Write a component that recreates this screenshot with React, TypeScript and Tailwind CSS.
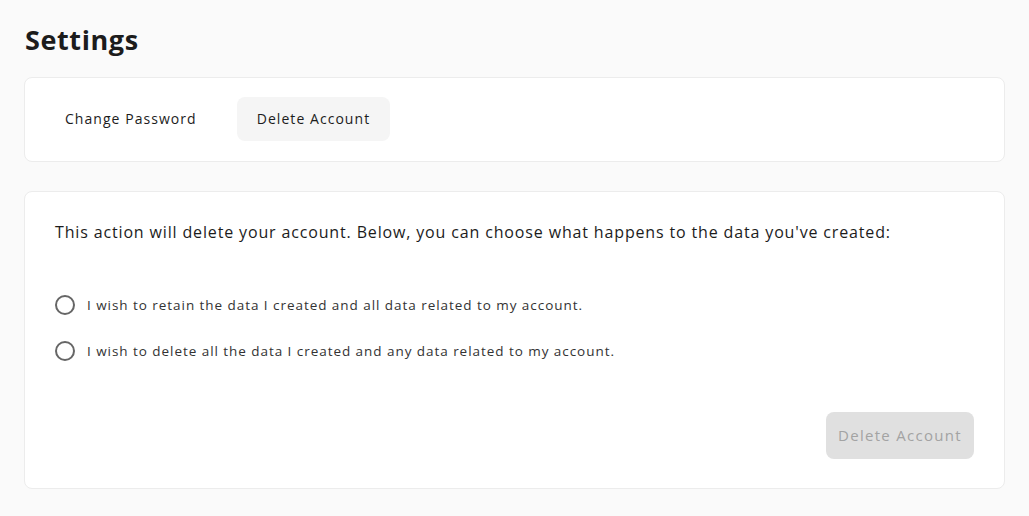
import React from "react";

export default function App() {
  return (
    <div
      className="min-h-[516px] w-full bg-[#fafafa] px-6 pt-[22px] text-[#1c1c1c]"
      style={{ fontFamily: '"Open Sans", "Noto Sans", sans-serif' }}
    >
      <h1 className="text-[27px] font-bold leading-[36px] pl-px tracking-[0.6px]">Settings</h1>
      <div className="mt-[19px] rounded-lg border border-[#ececec] bg-white px-5 pt-[19px] pb-[20px]">
        <div className="flex gap-5">
          <button className="h-[44px] rounded-lg px-5 pb-px text-[14px] tracking-[1.05px] text-[#1c1c1c]">
            Change Password
          </button>
          <button className="h-[44px] rounded-lg bg-[#f5f5f5] px-5 pb-px text-[14px] tracking-[1.05px] text-[#1c1c1c]">
            Delete Account
          </button>
        </div>
      </div>
      <div className="mt-[29px] rounded-lg border border-[#ececec] bg-white px-[30px] pt-[28px] pb-[29px]">
        <p className="text-[16px] leading-[24px] tracking-[0.85px]">
          This action will delete your account. Below, you can choose what happens to the data you've created:
        </p>
        <div className="mt-[51px] flex flex-col gap-[26px]">
          {[
            "I wish to retain the data I created and all data related to my account.",
            "I wish to delete all the data I created and any data related to my account.",
          ].map((t) => (
            <label key={t} className="flex h-[20px] items-center gap-[12px] text-[13.5px] tracking-[0.95px] text-[#333]">
              <span className="h-[20px] w-[20px] shrink-0 rounded-full border-2 border-[#666]" />
              <span>{t}</span>
            </label>
          ))}
        </div>
        <div className="mt-[51px] flex justify-end">
          <button className="h-[47px] rounded-lg bg-[#e0e0e0] px-[12px] text-[15px] font-medium tracking-[1.3px] text-[#a3a3a3]">
            Delete Account
          </button>
        </div>
      </div>
    </div>
  );
}
